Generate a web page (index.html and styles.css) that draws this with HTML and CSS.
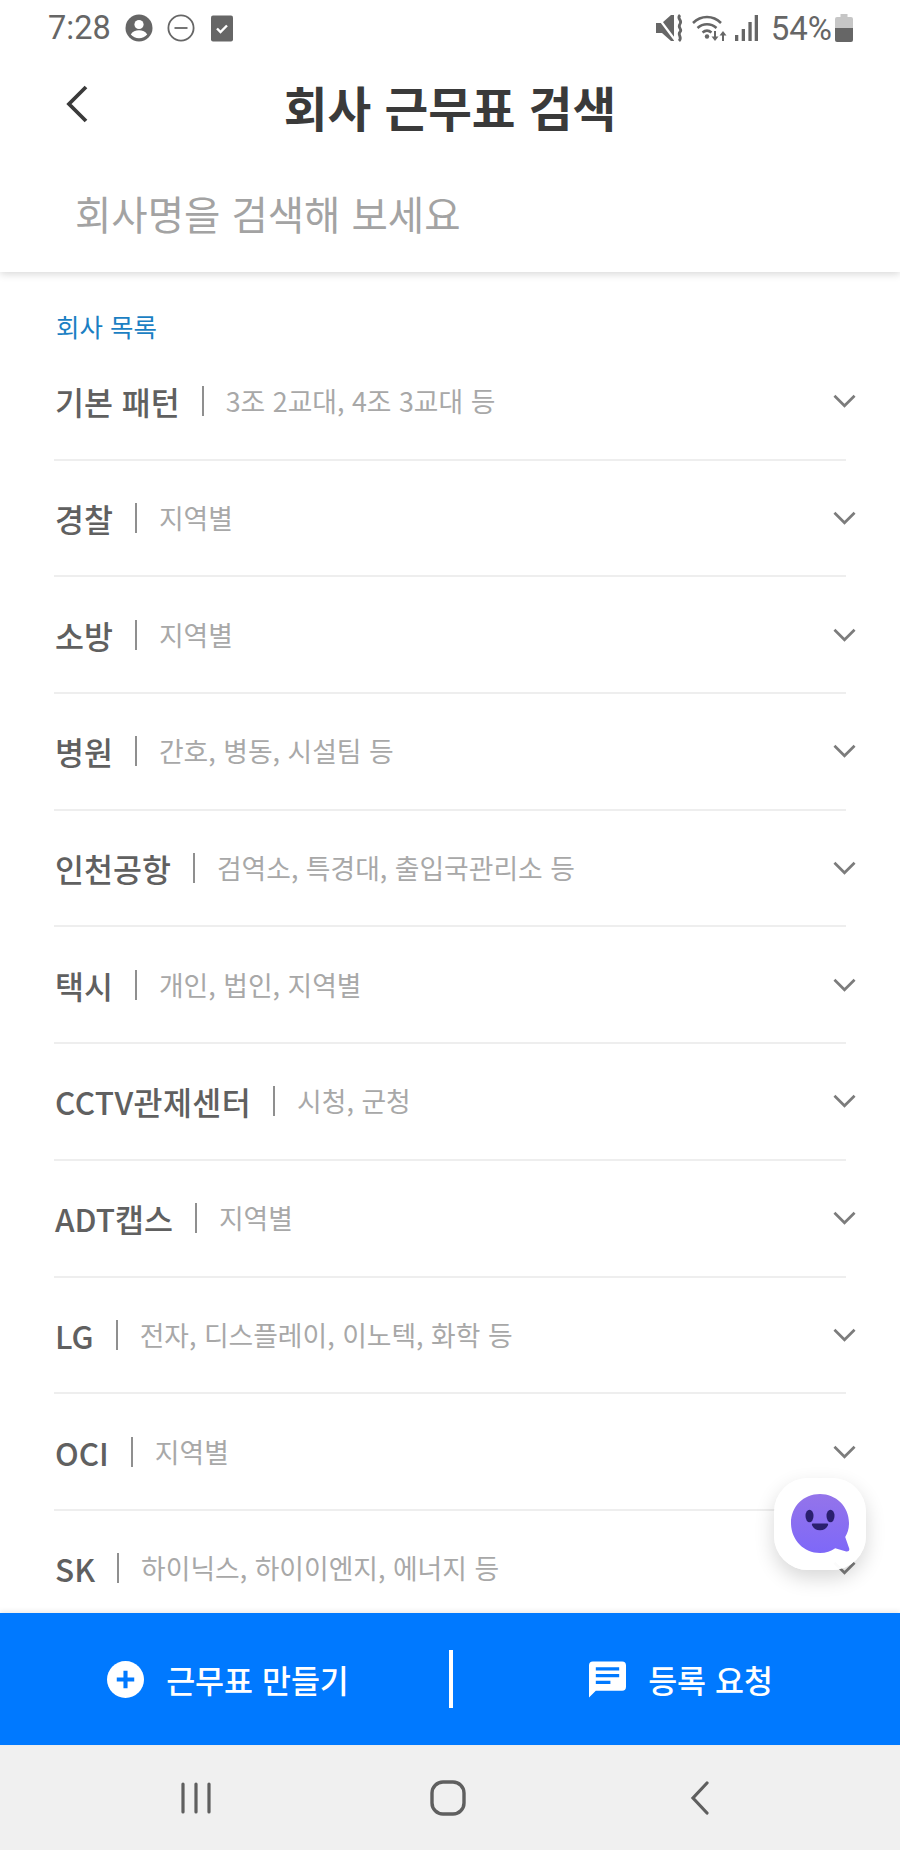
FILE: index.html
```html
<!DOCTYPE html>
<html lang="ko">
<head>
    <meta charset="UTF-8">
    <meta name="viewport" content="width=device-width, initial-scale=1.0">
    <title>회사 근무표 검색</title>
    <link rel="stylesheet" href="styles.css">
</head>
<body>
<div class="screen">
    <div class="top">
        <div class="status-bar">
            <div class="status-left">
                <span class="clock">7:28</span>
                <svg class="st-icon" viewBox="0 0 28 28"><circle cx="14" cy="14" r="13.5" fill="#666"/><circle cx="14" cy="10.5" r="4.6" fill="#fff"/><path d="M5.8 20.5c1.6-3 4.8-4.2 8.2-4.2s6.600 1.200 8.200 4.200c-2 2.300-5 3.700-8.200 3.700s-6.200-1.400-8.200-3.700z" fill="#fff"/></svg>
                <svg class="st-icon" viewBox="0 0 28 28"><circle cx="14" cy="14" r="12.6" fill="none" stroke="#666" stroke-width="1.800"/><path d="M7.500 14h13" stroke="#666" stroke-width="1.800"/></svg>
                <svg class="st-icon st-check" viewBox="0 0 22 27"><rect width="22" height="26" y="0.500" rx="2" fill="#666"/><path d="M6 13.500l3.500 3.500 6.500-6.500" fill="none" stroke="#fff" stroke-width="2.400"/></svg>
            </div>
            <div class="status-right">
                <svg class="st-mute" viewBox="0 0 28 28"><path d="M0 9h6l9-8h3v26h-3l-9-8H0z" fill="#666"/><path d="M1 2l18 24" stroke="#fff" stroke-width="2.200"/><path d="M24 1c-4 4 3 5 0 9s3 5 0 8 3 5-1 9" fill="none" stroke="#666" stroke-width="2.800"/></svg>
                <svg class="st-wifi" viewBox="0 0 36 28"><path d="M1 9C9 1 21 1 29 9M5.500 14c5.500-5 13.500-5 19 0M10.500 18.500c3-2.500 6-2.500 9 0" fill="none" stroke="#666" stroke-width="2.500"/><circle cx="15" cy="22.500" r="2.200" fill="#666"/><path d="M23 17v6" stroke="#666" stroke-width="2"/><path d="M19.500 22.500h7L23 27z" fill="#666"/><path d="M31 27v-6" stroke="#666" stroke-width="2"/><path d="M27.500 21.500h7L31 17z" fill="#666"/></svg>
                <svg class="st-signal" viewBox="0 0 24 28"><path d="M1 21h3.300v6H1zM7.700 15H11v12H7.700zM14.400 8h3.300v19h-3.300zM20.700 1H24v26h-3.300z" fill="#666"/></svg>
                <span class="battery-pct">54%</span>
                <svg class="st-battery" viewBox="0 0 18 28"><path d="M5.500 0h7v3h3.500a2 2 0 0 1 2 2v9H0V5a2 2 0 0 1 2-2h3.500z" fill="#c6c6c6"/><path d="M0 14h18v12a2 2 0 0 1-2 2H2a2 2 0 0 1-2-2z" fill="#666"/></svg>
            </div>
        </div>
        <div class="title-row">
            <svg class="back" viewBox="0 0 24 40"><path d="M21 3L4 20l17 17" fill="none" stroke="#3a3a3a" stroke-width="3.800"/></svg>
            <h1>회사 근무표 검색</h1>
        </div>
        <div class="search">회사명을 검색해 보세요</div>
    </div>

    <div class="list">
        <div class="list-label">회사 목록</div>
        <div class="row"><span class="name">기본 패턴</span><span class="sub">3조 2교대, 4조 3교대 등</span><svg class="chev" viewBox="0 0 24 14"><path d="M1.500 1.500L12 12 22.500 1.500" fill="none" stroke="#7c7c7c" stroke-width="2.800"/></svg></div>
        <div class="row"><span class="name">경찰</span><span class="sub">지역별</span><svg class="chev" viewBox="0 0 24 14"><path d="M1.500 1.500L12 12 22.500 1.500" fill="none" stroke="#7c7c7c" stroke-width="2.800"/></svg></div>
        <div class="row"><span class="name">소방</span><span class="sub">지역별</span><svg class="chev" viewBox="0 0 24 14"><path d="M1.500 1.500L12 12 22.500 1.500" fill="none" stroke="#7c7c7c" stroke-width="2.800"/></svg></div>
        <div class="row"><span class="name">병원</span><span class="sub">간호, 병동, 시설팀 등</span><svg class="chev" viewBox="0 0 24 14"><path d="M1.500 1.500L12 12 22.500 1.500" fill="none" stroke="#7c7c7c" stroke-width="2.800"/></svg></div>
        <div class="row"><span class="name">인천공항</span><span class="sub">검역소, 특경대, 출입국관리소 등</span><svg class="chev" viewBox="0 0 24 14"><path d="M1.500 1.500L12 12 22.500 1.500" fill="none" stroke="#7c7c7c" stroke-width="2.800"/></svg></div>
        <div class="row"><span class="name">택시</span><span class="sub">개인, 법인, 지역별</span><svg class="chev" viewBox="0 0 24 14"><path d="M1.500 1.500L12 12 22.500 1.500" fill="none" stroke="#7c7c7c" stroke-width="2.800"/></svg></div>
        <div class="row"><span class="name name-wide">CCTV관제센터</span><span class="sub">시청, 군청</span><svg class="chev" viewBox="0 0 24 14"><path d="M1.500 1.500L12 12 22.500 1.500" fill="none" stroke="#7c7c7c" stroke-width="2.800"/></svg></div>
        <div class="row"><span class="name">ADT캡스</span><span class="sub">지역별</span><svg class="chev" viewBox="0 0 24 14"><path d="M1.500 1.500L12 12 22.500 1.500" fill="none" stroke="#7c7c7c" stroke-width="2.800"/></svg></div>
        <div class="row"><span class="name">LG</span><span class="sub">전자, 디스플레이, 이노텍, 화학 등</span><svg class="chev" viewBox="0 0 24 14"><path d="M1.500 1.500L12 12 22.500 1.500" fill="none" stroke="#7c7c7c" stroke-width="2.800"/></svg></div>
        <div class="row"><span class="name">OCI</span><span class="sub">지역별</span><svg class="chev" viewBox="0 0 24 14"><path d="M1.500 1.500L12 12 22.500 1.500" fill="none" stroke="#7c7c7c" stroke-width="2.800"/></svg></div>
        <div class="row"><span class="name">SK</span><span class="sub">하이닉스, 하이이엔지, 에너지 등</span><svg class="chev" viewBox="0 0 24 14"><path d="M1.500 1.500L12 12 22.500 1.500" fill="none" stroke="#7c7c7c" stroke-width="2.800"/></svg></div>
    </div>

    <div class="fab">
        <svg viewBox="0 0 60 62"><defs><linearGradient id="bubble" x1="0" y1="0" x2="0" y2="1"><stop offset="0" stop-color="#9474ea"/><stop offset="1" stop-color="#7e68f8"/></linearGradient></defs><path d="M30 1C46 1 59 13.500 59 30c0 5.500-1.300 10-3.800 14l4 11.500c.6 2-1 3.500-3 3l-11-3.300C41 58 36 60 30 60 13.500 60 1 46.500 1 30S13.500 1 30 1z" fill="url(#bubble)"/><ellipse cx="19.500" cy="23" rx="4" ry="6.300" fill="#2a1f6e"/><ellipse cx="40.500" cy="23" rx="4" ry="6.300" fill="#2a1f6e"/><path d="M23 30.500h14c.9 0 1.400.8 1 1.700-1.200 3-4.200 5-8 5s-6.800-2-8-5c-.4-.9.100-1.700 1-1.700z" fill="#2a1f6e"/></svg>
    </div>

    <div class="action-bar">
        <div class="action">
            <svg class="action-icon" viewBox="0 0 36 36"><circle cx="18" cy="18" r="18" fill="#fff"/><path d="M18 9.500v17M9.500 18h17" stroke="#0079ff" stroke-width="4"/></svg>
            <span>근무표 만들기</span>
        </div>
        <div class="action-divider"></div>
        <div class="action">
            <svg class="action-icon" viewBox="0 0 38 37"><path d="M4 0h30a4 4 0 0 1 4 4v22a4 4 0 0 1-4 4H7l-7 7V4a4 4 0 0 1 4-4z" fill="#fff"/><path d="M7 7.500h24M7 14.500h24M7 21.500h15" stroke="#0079ff" stroke-width="3.400"/></svg>
            <span>등록 요청</span>
        </div>
    </div>

    <div class="nav-bar">
        <svg class="nav-recent" viewBox="0 0 32 32"><path d="M3 2v28M16 2v28M29 2v28" stroke="#5f5f5f" stroke-width="3.200" stroke-linecap="round"/></svg>
        <svg class="nav-home" viewBox="0 0 36 36"><rect x="2" y="2" width="32" height="32" rx="11" fill="none" stroke="#5f5f5f" stroke-width="3.400"/></svg>
        <svg class="nav-back" viewBox="0 0 20 34"><path d="M17 2L3 17l14 15" fill="none" stroke="#5f5f5f" stroke-width="3.200" stroke-linecap="round"/></svg>
    </div>
</div>
</body>
</html>
```

FILE: styles.css
```css
* {
    box-sizing: border-box;
}
html, body {
    margin: 0;
    padding: 0;
}
body {
    font-family: "Noto Sans CJK KR", "Noto Sans", sans-serif;
    background-color: #fff;
    color: #333;
}
.screen {
    position: relative;
    display: flex;
    flex-direction: column;
    width: 900px;
    height: 1850px;
    overflow: hidden;
}

/* status bar + header */
.top {
    flex: none;
    height: 272px;
    background-color: #fff;
    box-shadow: 0 2px 8px rgba(0, 0, 0, 0.16);
    position: relative;
    z-index: 1;
}
.status-bar {
    display: flex;
    justify-content: space-between;
    align-items: center;
    height: 56px;
    padding: 0 47px 0 48px;
    color: #666;
}
.status-left, .status-right {
    display: flex;
    align-items: center;
}
.clock {
    font-family: Roboto, sans-serif;
    font-size: 32.500px;
    margin-right: 14px;
}
.st-icon {
    width: 28px;
    height: 28px;
    margin-right: 14px;
}
.st-check {
    width: 22px;
    height: 27px;
    margin-left: 2px;
}
.st-mute {
    width: 28px;
    height: 28px;
    margin-right: 8px;
}
.st-wifi {
    width: 36px;
    height: 28px;
    margin-right: 6px;
}
.st-signal {
    width: 24px;
    height: 28px;
    margin-right: 13px;
}
.battery-pct {
    font-family: Roboto, sans-serif;
    font-size: 33px;
    margin-right: 3px;
}
.st-battery {
    width: 18px;
    height: 28px;
}
.title-row {
    position: relative;
    display: flex;
    justify-content: center;
    align-items: center;
    height: 70px;
    margin-top: 15px;
}
.title-row h1 {
    margin: 0;
    font-size: 47.500px;
    font-weight: 700;
    color: #3a3a3a;
}
.back {
    position: absolute;
    left: 65px;
    top: 13px;
    width: 24px;
    height: 40px;
}
.search {
    padding: 42px 0 0 75px;
    font-size: 39.500px;
    line-height: 60px;
    color: #a3a3a3;
}

/* list */
.list {
    flex: 1;
    overflow: hidden;
    padding: 0 54px;
}
.list-label {
    margin-top: 35px;
    padding-left: 2px;
    font-size: 25.500px;
    line-height: 37px;
    color: #1b7fc3;
}
.row {
    display: flex;
    align-items: center;
    height: 116.700px;
    padding-left: 1px;
    border-bottom: 2px solid #eee;
}
.name {
    font-size: 31.500px;
    font-weight: 500;
    color: #606060;
}
.name-wide {
    letter-spacing: 0.400px;
}
.sub {
    margin-left: 22px;
    padding-left: 24px;
    font-size: 26.800px;
    color: #a8a8a8;
    background: linear-gradient(#8f8f8f, #8f8f8f) left center / 2px 30px no-repeat;
    line-height: 40px;
}
.chev {
    width: 23px;
    height: 14px;
    margin-left: auto;
    margin-right: -10px;
}

/* floating chat button */
.fab {
    position: absolute;
    left: 774px;
    top: 1478px;
    width: 92px;
    height: 92px;
    display: flex;
    justify-content: center;
    align-items: center;
    background-color: rgba(255, 255, 255, 0.97);
    border-radius: 34px;
    box-shadow: 0 8px 20px rgba(0, 0, 0, 0.16);
}
.fab svg {
    width: 60px;
    height: 62px;
}

/* bottom bar */
.action-bar {
    flex: none;
    display: flex;
    align-items: center;
    height: 132px;
    background-color: #0079ff;
    color: #fff;
    position: relative;
    box-shadow: 0 -2px 5px rgba(0, 0, 0, 0.08);
}
.action {
    flex: 1;
    display: flex;
    justify-content: center;
    align-items: center;
    gap: 22px;
    padding-left: 9px;
    font-size: 31.500px;
    font-weight: 500;
}
.action-icon {
    width: 37px;
    height: 37px;
}
.action-divider {
    width: 4px;
    height: 58px;
    margin-left: 2px;
    background-color: #fff;
}
.nav-bar {
    flex: none;
    display: flex;
    justify-content: space-between;
    align-items: center;
    height: 105px;
    padding: 0 190px 0 180px;
    background-color: #f0f0f0;
}
.nav-recent {
    width: 32px;
    height: 32px;
}
.nav-home {
    width: 36px;
    height: 36px;
    margin-right: 6px;
}
.nav-back {
    width: 20px;
    height: 34px;
}
```
